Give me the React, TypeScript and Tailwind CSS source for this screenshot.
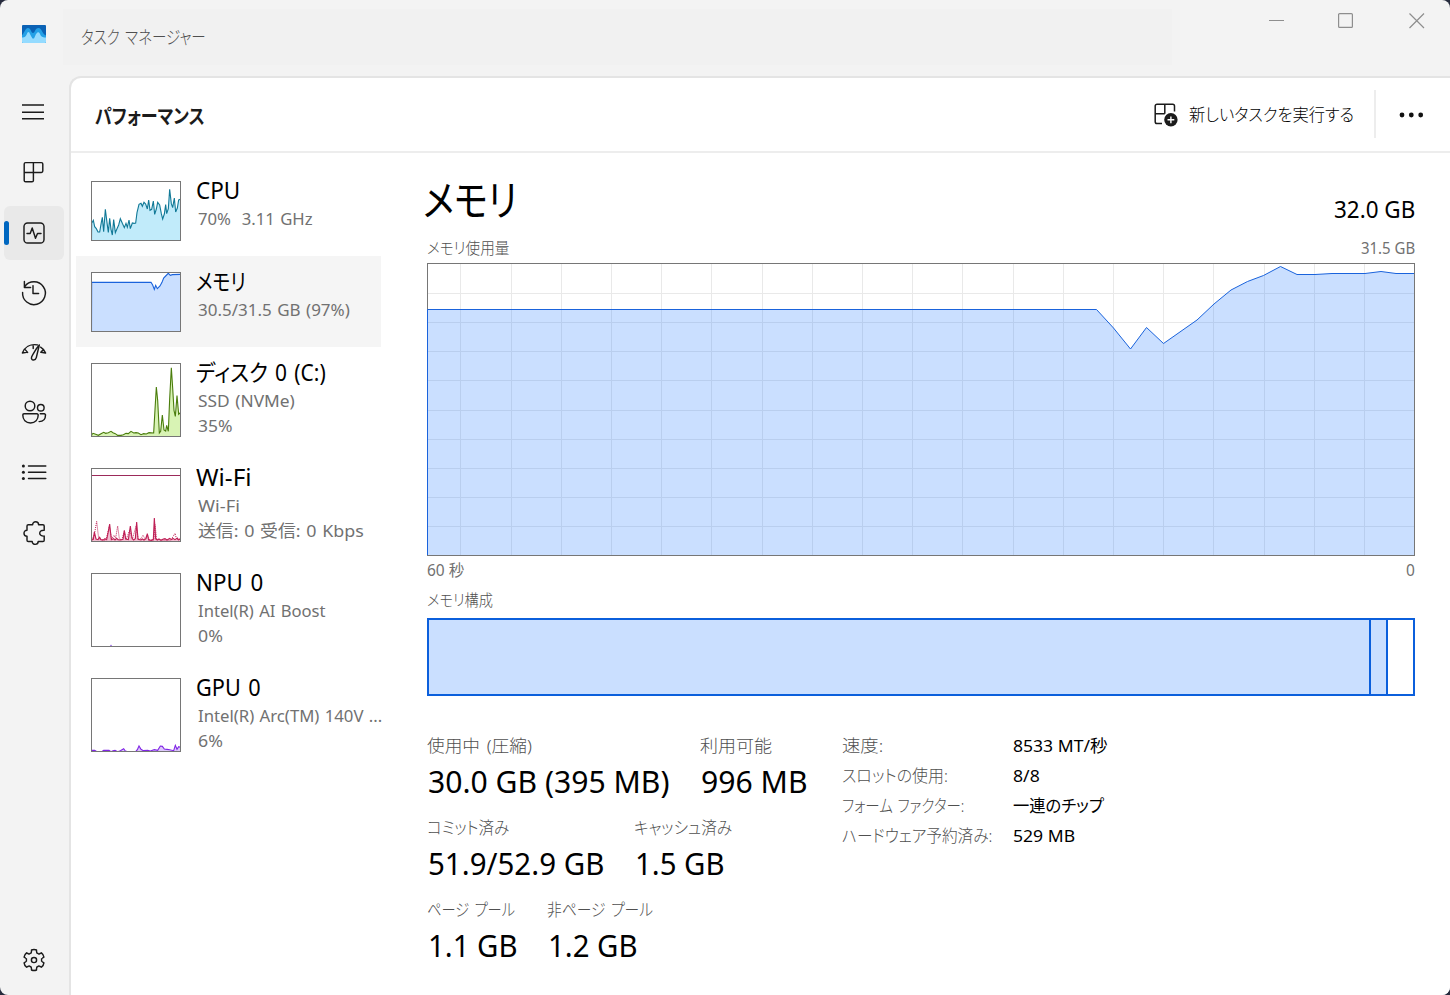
import { useLayoutEffect, useRef, type ReactNode } from "react";

function Fit({ w, children, className = "" }: { w: number; children: string; className?: string }) {
  const ref = useRef<HTMLSpanElement>(null);
  useLayoutEffect(() => {
    const el = ref.current;
    if (!el) return;
    el.style.transform = `scaleX(${w / el.offsetWidth})`;
  }, [w, children]);
  return (
    <span className={`block whitespace-nowrap ${className}`} style={{ width: w }}>
      <span ref={ref} className="inline-block origin-left whitespace-pre">
        {children}
      </span>
    </span>
  );
}

function Icon({ children }: { children: ReactNode }) {
  return (
    <svg
      width="32"
      height="32"
      viewBox="0 0 32 32"
      fill="none"
      stroke="#1b1b1b"
      strokeWidth="1.45"
      strokeLinecap="round"
      strokeLinejoin="round"
      className="block"
    >
      {children}
    </svg>
  );
}

function gearPath() {
  const pt = (deg: number, r: number) => {
    const a = ((deg - 90) * Math.PI) / 180;
    return `${(16 + r * Math.cos(a)).toFixed(2)} ${(16 + r * Math.sin(a)).toFixed(2)}`;
  };
  let d = "";
  for (let k = 0; k < 6; k++) {
    const a = k * 60;
    d += `${k === 0 ? "M" : "L"}${pt(a - 14, 10.3)}Q${pt(a, 11.1)} ${pt(a + 14, 10.3)}L${pt(a + 18, 8.4)}Q${pt(a + 21, 7.3)} ${pt(a + 27, 7.6)}L${pt(a + 33, 7.6)}Q${pt(a + 39, 7.3)} ${pt(a + 42, 8.4)}`;
  }
  return d + "Z";
}

const nav: { id: string; icon: ReactNode; active?: boolean; place: string }[] = [
  {
    id: "processes",
    place: "mb-[7px]",
    icon: (
      <Icon>
        <path d="M7.6 6.6H23.4a1.4 1.4 0 0 1 1.4 1.4V15a1.4 1.4 0 0 1-1.4 1.4H15.4V24.4a1.4 1.4 0 0 1-1.4 1.4H7.6a1.4 1.4 0 0 1-1.4-1.4V8a1.4 1.4 0 0 1 1.4-1.4ZM15.4 6.6V16.4M6.2 16.4H15.4" />
      </Icon>
    ),
  },
  {
    id: "performance",
    active: true,
    place: "mb-[6px]",
    icon: (
      <Icon>
        <rect x="6" y="6" width="20" height="20" rx="3.6" />
        <path d="M9 16.4H12.2L14.2 11L17.5 21.3L19.5 16.4H23" />
      </Icon>
    ),
  },
  {
    id: "history",
    place: "mb-[5px]",
    icon: (
      <Icon>
        <path d="M6.4 4.4V10.4H12.6M4.6 15.4A11.4 11.4 0 1 0 6.7 9.6M15 8.6V16.5H20.6" />
      </Icon>
    ),
  },
  {
    id: "startup",
    place: "mb-[6px]",
    icon: (
      <Icon>
        <path d="M4.4 17C6.6 11.2 12 7.6 19.4 8.9M4.4 17L8.6 16.4M7 13.4L9.6 16.4M15.2 9.5V12.6M22.6 11.2C25 12.6 26.6 14.5 27.6 17L23 16.2M25.4 13.6L22.8 16.2" />
        <path d="M21.3 9C19.2 10.9 14.6 18.6 13.7 20.7C12.9 22.7 14 24.2 15.6 24C17.2 23.9 18 22.9 18.3 21.6Z" />
      </Icon>
    ),
  },
  {
    id: "users",
    place: "mb-[6px]",
    icon: (
      <Icon>
        <circle cx="12" cy="10" r="4.8" />
        <circle cx="22.8" cy="11.7" r="3.3" />
        <path d="M6 17.8H19a1.2 1.2 0 0 1 1.2 1.2c0 4.6-3 7.9-7.7 7.9s-7.7-3.3-7.7-7.9A1.2 1.2 0 0 1 6 17.8ZM22.3 17.8H26.3a1.2 1.2 0 0 1 1.2 1.2c0 4-2.4 6.6-6.4 6.6" />
      </Icon>
    ),
  },
  {
    id: "details",
    place: "mb-[7px]",
    icon: (
      <Icon>
        <path d="M10.5 10H27.8M10.5 16.2H27.8M10.5 22.4H27.8" />
        <g fill="#1b1b1b" stroke="none">
          <circle cx="5.4" cy="10" r="1.5" />
          <circle cx="5.4" cy="16.2" r="1.5" />
          <circle cx="5.4" cy="22.4" r="1.5" />
        </g>
      </Icon>
    ),
  },
  {
    id: "services",
    place: "",
    icon: (
      <Icon>
        <path d="M10.3 7.7H14.6C14.6 3.8 20.6 3.8 20.6 7.7H24.9a1.3 1.3 0 0 1 1.3 1.3V13.2C20.2 12.8 20.2 19.5 26.2 19.1V23.2a1.3 1.3 0 0 1-1.3 1.3H20.2C20.2 28.3 14.2 28.3 14.2 24.5H10.3A1.3 1.3 0 0 1 9 23.2V19.1C5 19.1 5 13.2 9 13.2V9a1.3 1.3 0 0 1 1.3-1.3Z" />
      </Icon>
    ),
  },
];

interface Series {
  h: number;
  line: string;
  stroke: string;
  fill: string;
  dashed?: string;
  marker?: boolean;
}

/** Thumbnail graph. Points are in thirds of a pixel. */
function Thumb({ s }: { s: Series }) {
  return (
    <svg width="90" height={s.h} viewBox={`0 0 270 ${s.h * 3}`} className="block shrink-0">
      <rect x="0" y="0" width="270" height={s.h * 3} fill="#fff" />
      {s.line && <polygon points={`1,${s.h * 3} ${s.line} 268,${s.h * 3}`} fill={s.fill} />}
      {s.line && <polyline points={`1.5,${s.h * 3} ${s.line}`} fill="none" stroke={s.stroke} strokeWidth="3.3" />}
      {s.dashed && <polyline points={s.dashed} fill="none" stroke={s.stroke} strokeWidth="3" strokeDasharray="3 3" />}
      {s.marker && <path d="M0 22.5H270" stroke="#9c2a5a" strokeWidth="3" />}
      <rect x="1.5" y="1.5" width="267" height={s.h * 3 - 3} fill="none" stroke="#767676" strokeWidth="3" />
    </svg>
  );
}

const resources: {
  title: string;
  tw: number;
  sub: [string, number][];
  series: Series;
  active?: boolean;
}[] = [
  {
    title: "CPU",
    tw: 44,
    sub: [["70%  3.11 GHz", 115]],
    series: {
      h: 60,
      stroke: "#117997",
      fill: "#c1ebfa",
      line: "2,127 7,118 11,137 16,143 21,153 26,153 31,124 34,109 38,152 43,85 48,125 52,154 56,112 60,145 64,162 68,116 73,155 78,143 83,132 88,113 94,127 100,140 105,127 109,139 114,117 118,143 124,126 129,127 134,126 138,95 144,70 150,67 154,76 159,64 164,69 169,84 173,57 177,88 182,85 187,60 191,100 196,84 200,64 206,72 211,98 215,114 220,99 224,71 227,98 232,83 236,25 241,68 245,80 250,51 254,93 259,81 263,57 268,55",
    },
  },
  {
    title: "メモリ",
    tw: 50,
    active: true,
    sub: [["30.5/31.5 GB (97%)", 152]],
    series: {
      h: 60,
      stroke: "#1a63dc",
      fill: "#cadfff",
      line: "2,31 180,31 185,39 190,52 194,40 199,50 207,42 213,31 218,18 224,12 232,4 238,10 244,8 268,7",
    },
  },
  {
    title: "ディスク 0 (C:)",
    tw: 130,
    sub: [
      ["SSD (NVMe)", 97],
      ["35%", 35],
    ],
    series: {
      h: 74,
      stroke: "#4a7d0c",
      fill: "#d8f3b4",
      line: "2,215 6,211 14,214 22,217 30,212 38,208 44,211 52,209 60,205 66,209 73,212 80,217 90,217 97,215 105,211 112,212 120,205 128,210 135,209 142,210 150,215 158,212 166,213 174,209 188,210 192,140 196,72 200,112 205,210 209,205 214,156 219,201 224,204 227,187 232,205 236,108 241,14 245,75 249,142 253,160 258,98 263,154 268,149",
    },
  },
  {
    title: "Wi-Fi",
    tw: 56,
    sub: [
      ["Wi-Fi", 42],
      ["送信: 0 受信: 0 Kbps", 166],
    ],
    series: {
      h: 74,
      stroke: "#bf2056",
      fill: "#f1bdd0",
      marker: true,
      line: "2,216 7,214 10,192 15,213 21,215 26,208 30,215 37,216 42,212 47,215 52,190 56,168 61,215 68,212 72,216 77,211 81,215 89,216 96,214 100,187 104,213 112,215 118,174 123,210 128,216 133,212 137,162 141,214 150,216 154,213 159,216 165,212 169,197 173,216 182,217 187,214 190,150 194,213 199,216 204,213 210,217 217,213 222,212 228,216 236,211 242,215 246,211 252,215 259,210 263,216 268,212",
      dashed:
        "3,214 10,200 17,160 23,212 32,216 45,216 55,175 62,213 69,202 74,210 80,174 85,212 92,216 100,190 106,214 116,186 124,214 135,175 142,215 150,212 156,202 162,212 169,200 176,216 188,216 192,170 197,214 215,216 240,216 252,196 257,214 268,214",
    },
  },
  {
    title: "NPU 0",
    tw: 67,
    sub: [
      ["Intel(R) AI Boost", 128],
      ["0%", 25],
    ],
    series: { h: 74, stroke: "#9d6ce8", fill: "#e4d3fb", line: "2,222 56,222 60,217 64,222 268,222" },
  },
  {
    title: "GPU 0",
    tw: 65,
    sub: [
      ["Intel(R) Arc(TM) 140V ...", 184],
      ["6%", 25],
    ],
    series: {
      h: 74,
      stroke: "#8126e6",
      fill: "#dcc8fa",
      line: "2,217 11,217 18,221 32,221 38,217 54,217 60,221 66,218 72,217 80,221 88,218 98,212 103,219 112,221 134,221 139,215 144,204 150,214 157,218 170,217 178,219 190,215 200,217 208,204 214,205 220,213 228,214 236,215 248,218 253,202 258,214 263,206 268,208",
    },
  },
];

const verticals = [33, 84, 134, 184, 234, 284, 335, 385, 435, 485, 535, 586, 636, 686, 736, 786, 837, 887, 937];
const horizontals = [30, 59, 88, 117, 147, 176, 205, 234, 263];
const memory =
  "0.5,46.5 669.5,46.5 686.5,65 703.5,86 719.5,64.5 736.5,80.5 770,57 787,41 804,27 820.5,18.5 836.5,12.5 853.5,3.5 870,11.5 888,11.5 905,10.5 938,10.5 954,8.5 969,10.5 987,10.5";

function MemoryChart() {
  return (
    <svg width="988" height="293" viewBox="0 0 988 293" className="block">
      {verticals.map((x) => (
        <path key={x} d={`M${x + 0.5} 0V293`} stroke="#e9e9e9" />
      ))}
      {horizontals.map((y) => (
        <path key={y} d={`M0 ${y + 0.5}H988`} stroke="#e9e9e9" />
      ))}
      <polygon points={`0,293 ${memory} 988,293`} fill="rgba(25,118,255,0.23)" />
      <rect x="0.5" y="0.5" width="987" height="292" fill="none" stroke="#767676" />
      <polyline points={`0.5,292 ${memory}`} fill="none" stroke="#1a63dc" strokeWidth="1" />
    </svg>
  );
}

type Stat = { label: string; lw: number; value: string; vw: number; col: string };
const stats: Stat[][] = [
  [
    { label: "使用中 (圧縮)", lw: 105, value: "30.0 GB (395 MB)", vw: 241, col: "w-[273px]" },
    { label: "利用可能", lw: 72, value: "996 MB", vw: 107, col: "w-[120px]" },
  ],
  [
    { label: "コミット済み", lw: 82, value: "51.9/52.9 GB", vw: 176, col: "w-[207px]" },
    { label: "キャッシュ済み", lw: 98, value: "1.5 GB", vw: 90, col: "w-[120px]" },
  ],
  [
    { label: "ページ プール", lw: 88, value: "1.1 GB", vw: 90, col: "w-[120px]" },
    { label: "非ページ プール", lw: 106, value: "1.2 GB", vw: 90, col: "w-[120px]" },
  ],
];

const facts: [string, number, string, number][] = [
  ["速度:", 41, "8533 MT/秒", 95],
  ["スロットの使用:", 106, "8/8", 27],
  ["フォーム ファクター:", 122, "一連のチップ", 91],
  ["ハードウェア予約済み:", 150, "529 MB", 62],
];

export default function App() {
  return (
    <div className="h-[995px] w-[1450px] overflow-hidden bg-[#262b3d]">
      <div className="flex h-full w-full flex-col overflow-hidden rounded-lg bg-[#f3f3f3] font-['Noto_Sans','Noto_Sans_CJK_JP',sans-serif] text-black [font-feature-settings:'palt']">
        <header className="flex h-[76px] shrink-0 items-start justify-between">
          <div className="flex">
            <svg width="24" height="18" viewBox="0 0 24 18" className="mt-[25px] ml-[22px] block">
              <rect width="24" height="18" rx="1" fill="#0b62b5" />
              <path d="M0 10C2 9 3 3 6 3S9 8 11 8S13 3 16.5 3S20 9 24 10.5V17a1 1 0 0 1-1 1H1a1 1 0 0 1-1-1Z" fill="#23a0e6" />
              <path d="M0 12.5C3 12.5 4 11.500 5.500 7.500L7 7L9 11L10.500 13.500L12 13.500L14 9L16 7L17.500 8L19 11C20.500 12.500 22 12.500 24 12.500V17a1 1 0 0 1-1 1H1a1 1 0 0 1-1-1Z" fill="#94dbff" />
            </svg>
            <div className="mt-[9px] ml-[17px] h-14 w-[1109px] bg-[#f1f1f1] pl-[18px] text-[18px] leading-[56px] font-light text-[#4f4f4f] [word-spacing:2px]">
              <Fit w={125}>タスク マネージャー</Fit>
            </div>
          </div>
          <svg width="156" height="16" viewBox="0 0 156 16" className="mt-[13px] mr-[25px] block" fill="none" stroke="#8e8e8e" strokeWidth="1.2">
            <path d="M0 7.5H15M140.5 0.5L155 15M155 0.5L140.5 15" />
            <rect x="69.6" y="0.6" width="13.8" height="13.8" rx="1" />
          </svg>
        </header>

        <div className="flex min-h-0 flex-1">
          <nav className="flex w-[69px] shrink-0 flex-col pt-5">
            <button className="ml-[18px] h-8 w-8">
              <svg width="32" height="32" viewBox="0 0 32 32" stroke="#1b1b1b" strokeWidth="1.4" className="block">
                <path d="M4 9H26M4 16.3H26M4 22.8H26" />
              </svg>
            </button>
            <div className="mt-[17px] flex flex-col">
              {nav.map((n) => (
                <button
                  key={n.id}
                  className={`ml-1 flex h-[54px] w-[60px] items-center rounded-md ${n.place} ${n.active ? "bg-[#e9e9e9]" : ""}`}
                >
                  <span className={`h-6 w-[5px] rounded-full ${n.active ? "bg-[#0067c0]" : ""}`} />
                  <span className="ml-[9px]">{n.icon}</span>
                </button>
              ))}
            </div>
            <button className="mt-auto mb-[19px] ml-[18px] h-8 w-8">
              <Icon>
                <path d={gearPath()} />
                <circle cx="16" cy="16" r="2.6" />
              </Icon>
            </button>
          </nav>

          <main className="flex min-w-0 flex-1 flex-col rounded-tl-xl border-t-2 border-l-2 border-[#e4e4e4] bg-white">
            <div className="flex h-[75px] shrink-0 items-center border-b-2 border-[#ededed] pl-6">
              <h1 className="mt-[4px] text-[20px] leading-7 font-bold text-[#1b1b1b]">
                <Fit w={110}>パフォーマンス</Fit>
              </h1>
              <button className="ml-auto flex items-center text-[17px] text-[#1b1b1b]">
                <svg width="26" height="26" viewBox="0 0 26 26" fill="none" stroke="#1b1b1b" strokeWidth="1.5" className="mr-[10px] block">
                  <path d="M9 21.5H4a1.8 1.8 0 0 1-1.8-1.8V4A1.8 1.8 0 0 1 4 2.2H19.700A1.8 1.8 0 0 1 21.5 4V9.5M11.8 2.2V11.8M2.2 11.8H11.8" />
                  <circle cx="17.9" cy="17.8" r="6.7" fill="#1b1b1b" stroke="none" />
                  <path d="M17.9 14.4V21.2M14.500 17.8H21.300" stroke="#fff" strokeWidth="1.4" />
                </svg>
                <Fit w={165} className="font-light text-black">
                  新しいタスクを実行する
                </Fit>
              </button>
              <span className="mt-[-1px] ml-[20px] h-12 w-[2px] bg-[#ededed]" />
              <svg width="26" height="6" viewBox="0 0 26 6" fill="#111" className="mr-[24px] ml-[23px] block">
                <circle cx="3" cy="3" r="2.4" />
                <circle cx="12.3" cy="3" r="2.4" />
                <circle cx="21.7" cy="3" r="2.4" />
              </svg>
              <span className="w-[1px]" />
            </div>

            <div className="flex min-h-0 flex-1">
              <aside className="w-[310px] shrink-0 pt-3 pl-[5px]">
                {resources.map((r) => (
                  <div
                    key={r.title}
                    className={`flex w-[305px] pl-[15px] ${r.series.h === 60 ? "h-[91px]" : "h-[105px]"} ${r.active ? "bg-[#f5f5f5]" : ""}`}
                  >
                    <div className="mt-4">
                      <Thumb s={r.series} />
                    </div>
                    <div className="pt-[10px] pl-[15px]">
                      <div className="text-[23px] leading-[30px] [word-spacing:2px]">
                        <Fit w={r.tw}>{r.title}</Fit>
                      </div>
                      <div className="mt-[1px] pl-[2px] text-[17px] leading-[25px] text-[#717171] [word-spacing:1px]">
                        {r.sub.map(([t, w]) => (
                          <Fit key={t} w={w}>
                            {t}
                          </Fit>
                        ))}
                      </div>
                    </div>
                  </div>
                ))}
              </aside>

              <section className="ml-[46px] w-[988px]">
                <div className="flex h-[82px] justify-between">
                  <h2 className="-ml-[4px] mt-[17px] text-[42px] leading-[60px]">
                    <Fit w={94}>メモリ</Fit>
                  </h2>
                  <div className="mt-[41px] text-[23px] leading-[30px]">
                    <Fit w={81}>32.0 GB</Fit>
                  </div>
                </div>
                <div className="flex h-7 justify-between text-[15.5px] leading-[26px] text-[#717171]">
                  <Fit w={82} className="font-light text-[#505050]">
                    メモリ使用量
                  </Fit>
                  <Fit w={54}>31.5 GB</Fit>
                </div>
                <MemoryChart />
                <div className="flex h-[30px] justify-between text-[15.5px] leading-[29px] text-[#717171]">
                  <Fit w={37}>60 秒</Fit>
                  <Fit w={9}>0</Fit>
                </div>
                <div className="h-[32px] text-[15.5px] leading-[29px] font-light text-[#505050]">
                  <Fit w={66}>メモリ構成</Fit>
                </div>
                <div className="flex h-[78px] border-2 border-[#0b5fdc]">
                  <div className="w-[942px] border-r-2 border-[#0b5fdc] bg-[#cadfff]" />
                  <div className="w-[17px] border-r-2 border-[#0b5fdc] bg-[#cadfff]" />
                </div>

                <div className="mt-9 flex">
                  <div className="w-[415px]">
                    {stats.map((row, i) => (
                      <div key={i} className="flex h-[82px]">
                        {row.map((s) => (
                          <div key={s.label} className={`shrink-0 ${s.col}`}>
                            <div className="text-[17px] leading-[28px] font-light text-[#505050] [word-spacing:2px]">
                              <Fit w={s.lw}>{s.label}</Fit>
                            </div>
                            <div className="-mt-[1px] pl-[1px] text-[31px] leading-[44px]">
                              <Fit w={s.vw}>{s.value}</Fit>
                            </div>
                          </div>
                        ))}
                      </div>
                    ))}
                  </div>
                  <div>
                    {facts.map(([label, lw, value, vw]) => (
                      <div key={label} className="flex h-[30px] text-[17px] leading-[28px]">
                        <div className="w-[171px] font-light text-[#505050] [word-spacing:1px]">
                          <Fit w={lw}>{label}</Fit>
                        </div>
                        <Fit w={vw}>{value}</Fit>
                      </div>
                    ))}
                  </div>
                </div>
              </section>
            </div>
          </main>
        </div>
      </div>
    </div>
  );
}
